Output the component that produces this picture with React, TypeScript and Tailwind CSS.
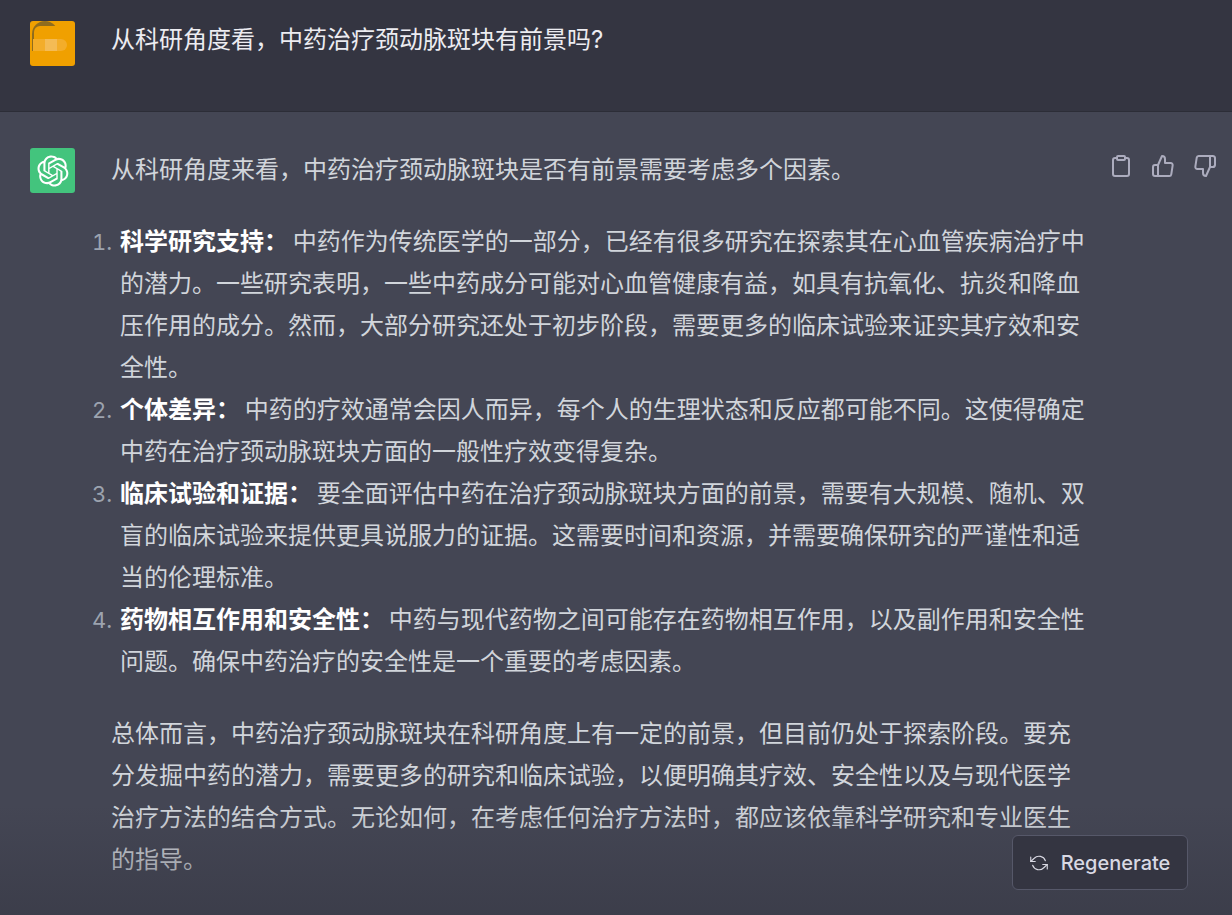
import React from 'react';

const logoPath =
  'M37.5324 16.8707C37.9808 15.5241 38.1363 14.0974 37.9886 12.6859C37.8409 11.2744 37.3934 9.91076 36.676 8.68622C35.6126 6.83404 33.9882 5.3676 32.0373 4.4985C30.0864 3.62941 27.9098 3.40259 25.8215 3.85078C24.8796 2.7893 23.7219 1.94125 22.4257 1.36341C21.1295 0.785575 19.7249 0.491269 18.3058 0.500197C16.1708 0.495044 14.0893 1.16803 12.3614 2.42214C10.6335 3.67624 9.34853 5.44666 8.6917 7.47815C7.30085 7.76286 5.98686 8.3414 4.8377 9.17505C3.68854 10.0087 2.73073 11.0782 2.02839 12.312C0.956464 14.1591 0.498905 16.2988 0.721698 18.4228C0.944492 20.5467 1.83612 22.5449 3.268 24.1293C2.81966 25.4759 2.66413 26.9026 2.81182 28.3141C2.95951 29.7256 3.40701 31.0892 4.12437 32.3138C5.18791 34.1659 6.8123 35.6322 8.76321 36.5013C10.7141 37.3704 12.8907 37.5973 14.9789 37.1492C15.9208 38.2107 17.0786 39.0587 18.3747 39.6366C19.6709 40.2144 21.0755 40.5087 22.4946 40.4998C24.6307 40.5054 26.7133 39.8321 28.4418 38.5772C30.1704 37.3223 31.4556 35.5506 32.1119 33.5179C33.5027 33.2332 34.8167 32.6547 35.9659 31.821C37.115 30.9874 38.0728 29.9178 38.7752 28.684C39.8458 26.8371 40.3023 24.6979 40.0789 22.5748C39.8556 20.4517 38.9639 18.4544 37.5324 16.8707ZM22.4978 37.8849C20.7443 37.8874 19.0459 37.2733 17.6994 36.1501C17.7601 36.117 17.8666 36.0586 17.936 36.0161L25.9004 31.4156C26.1003 31.3019 26.2663 31.137 26.3813 30.9378C26.4964 30.7386 26.5563 30.5124 26.5549 30.2825V19.0542L29.9213 20.998C29.9389 21.0068 29.9541 21.0198 29.9656 21.0359C29.977 21.052 29.9842 21.0707 29.9867 21.0902V30.3889C29.9842 32.375 29.1946 34.2791 27.7909 35.6841C26.3872 37.0892 24.4838 37.8806 22.4978 37.8849ZM6.39227 31.0064C5.51397 29.4888 5.19742 27.7107 5.49804 25.9832C5.55718 26.0187 5.66048 26.0818 5.73461 26.1244L13.699 30.7248C13.8975 30.8408 14.1233 30.902 14.3532 30.902C14.583 30.902 14.8088 30.8408 15.0073 30.7248L24.731 25.1103V28.9979C24.7321 29.0177 24.7283 29.0376 24.7199 29.0556C24.7115 29.0736 24.6988 29.0893 24.6829 29.1012L16.6317 33.7497C14.9096 34.7416 12.8643 35.0097 10.9447 34.4954C9.02506 33.9811 7.38785 32.7263 6.39227 31.0064ZM4.29707 13.6194C5.17156 12.0998 6.55279 10.9364 8.19885 10.3327C8.19885 10.4013 8.19491 10.5228 8.19491 10.6071V19.808C8.19351 20.0378 8.25334 20.2638 8.36823 20.4629C8.48312 20.6619 8.64893 20.8267 8.84863 20.9404L18.5723 26.5542L15.206 28.4979C15.1894 28.5089 15.1703 28.5155 15.1505 28.5173C15.1307 28.5191 15.1107 28.516 15.0924 28.5082L7.04046 23.8557C5.32135 22.8601 4.06716 21.2235 3.55289 19.3046C3.03862 17.3858 3.30624 15.3413 4.29707 13.6194ZM31.955 20.0556L22.2312 14.4411L25.5976 12.4981C25.6142 12.4872 25.6333 12.4805 25.6531 12.4787C25.6729 12.4769 25.6928 12.4801 25.7111 12.4879L33.7631 17.1364C34.9967 17.849 36.0017 18.8982 36.6606 20.1613C37.3194 21.4244 37.6047 22.849 37.4832 24.2684C37.3617 25.6878 36.8382 27.0432 35.9743 28.1759C35.1103 29.3086 33.9415 30.1717 32.6047 30.6641C32.6047 30.5947 32.6047 30.4733 32.6047 30.3889V21.188C32.6066 20.9586 32.5474 20.7328 32.4332 20.5338C32.319 20.3348 32.154 20.1698 31.955 20.0556ZM35.3055 15.0128C35.2464 14.9765 35.1431 14.9142 35.069 14.8717L27.1045 10.2712C26.906 10.1554 26.6803 10.0943 26.4504 10.0943C26.2206 10.0943 25.9948 10.1554 25.7963 10.2712L16.0726 15.8858V11.9982C16.0715 11.9783 16.0753 11.9585 16.0837 11.9405C16.0921 11.9225 16.1048 11.9068 16.1207 11.8949L24.1719 7.25025C25.4053 6.53903 26.8158 6.19376 28.2383 6.25482C29.6608 6.31589 31.0364 6.78077 32.2044 7.59508C33.3723 8.40939 34.2842 9.53945 34.8334 10.8531C35.3826 12.1667 35.5464 13.6095 35.3055 15.0128ZM14.2424 21.9419L10.8752 19.9981C10.8576 19.9893 10.8423 19.9763 10.8309 19.9602C10.8195 19.9441 10.8122 19.9254 10.8098 19.9058V10.6071C10.8107 9.18295 11.2173 7.78848 11.9819 6.58696C12.7466 5.38544 13.8377 4.42659 15.1275 3.82264C16.4173 3.21869 17.8524 2.99464 19.2649 3.1767C20.6775 3.35876 22.0089 3.93941 23.1034 4.85067C23.0427 4.88379 22.937 4.94215 22.8668 4.98473L14.9024 9.58517C14.7025 9.69878 14.5366 9.86356 14.4215 10.0626C14.3065 10.2616 14.2466 10.4877 14.2479 10.7175L14.2424 21.9419ZM16.071 17.9991L20.4018 15.4978L24.7325 17.9975V22.9985L20.4018 25.4983L16.071 22.9985V17.9991Z';

const items = [
  {
    title: '科学研究支持：',
    marker: "list-['1.__']",
    body: '中药作为传统医学的一部分，已经有很多研究在探索其在心血管疾病治疗中的潜力。一些研究表明，一些中药成分可能对心血管健康有益，如具有抗氧化、抗炎和降血压作用的成分。然而，大部分研究还处于初步阶段，需要更多的临床试验来证实其疗效和安全性。',
  },
  {
    title: '个体差异：',
    marker: "list-['2.__']",
    body: '中药的疗效通常会因人而异，每个人的生理状态和反应都可能不同。这使得确定中药在治疗颈动脉斑块方面的一般性疗效变得复杂。',
  },
  {
    title: '临床试验和证据：',
    marker: "list-['3.__']",
    body: '要全面评估中药在治疗颈动脉斑块方面的前景，需要有大规模、随机、双盲的临床试验来提供更具说服力的证据。这需要时间和资源，并需要确保研究的严谨性和适当的伦理标准。',
  },
  {
    title: '药物相互作用和安全性：',
    marker: "list-['4.__']",
    body: '中药与现代药物之间可能存在药物相互作用，以及副作用和安全性问题。确保中药治疗的安全性是一个重要的考虑因素。',
  },
];

function FeedbackIcons() {
  return (
    <div className="flex shrink-0 gap-[18px] pl-[19px] pt-[5px] text-[#acacbe]">
      <svg className="h-6 w-6" viewBox="0 0 24 24" fill="none" stroke="currentColor" strokeWidth="2" strokeLinecap="round" strokeLinejoin="round">
        <path d="M16 4h2a2 2 0 0 1 2 2v14a2 2 0 0 1-2 2H6a2 2 0 0 1-2-2V6a2 2 0 0 1 2-2h2" />
        <rect x="8" y="2" width="8" height="4" rx="1" ry="1" />
      </svg>
      <svg className="h-6 w-6" viewBox="0 0 24 24" fill="none" stroke="currentColor" strokeWidth="2" strokeLinecap="round" strokeLinejoin="round">
        <path d="M14 9V5a3 3 0 0 0-3-3l-4 9v11h11.28a2 2 0 0 0 2-1.7l1.38-9a2 2 0 0 0-2-2.3zM7 22H4a2 2 0 0 1-2-2v-7a2 2 0 0 1 2-2h3" />
      </svg>
      <svg className="h-6 w-6" viewBox="0 0 24 24" fill="none" stroke="currentColor" strokeWidth="2" strokeLinecap="round" strokeLinejoin="round">
        <path d="M10 15v4a3 3 0 0 0 3 3l4-9V2H5.72a2 2 0 0 0-2 1.7l-1.38 9a2 2 0 0 0 2 2.3zm7-13h2.67A2.31 2.31 0 0 1 22 4v7a2.31 2.31 0 0 1-2.33 2H17" />
      </svg>
    </div>
  );
}

export default function App() {
  return (
    <div className="relative h-[915px] w-[1232px] overflow-hidden bg-[#444654] font-['Inter','Noto_Sans_CJK_SC',sans-serif] text-[24px] leading-[42px] text-[#d1d5db]">
      {/* user message */}
      <div className="flex h-[112px] border-b border-[#2c2d37] bg-[#343541] pl-[30px] pt-[19px]">
        <div className="relative mt-[2px] h-[45px] w-[45px] shrink-0 overflow-hidden rounded-[3px] bg-[#f0a000]">
          <div className="absolute left-[2px] top-0 h-[30px] w-[26px] rounded-t-[13px] bg-[#8f6c1e]" />
          <div className="absolute left-[4px] top-[5px] h-[30px] w-[41px] rounded-tl-[6px] bg-[#f0a000]" />
          <div className="absolute left-[3px] top-[18px] h-[12px] w-[34px] rounded-r-[6px] bg-[#f3ad2a]" />
          <div className="absolute left-[15px] top-[18px] h-[12px] w-[12px] bg-[#f4bb55]" />
        </div>
        <div className="pl-[36px] text-[#ececf1]">从科研角度看，中药治疗颈动脉斑块有前景吗?</div>
      </div>

      {/* assistant message */}
      <div className="flex pl-[30px] pr-[15px] pt-[37px]">
        <div className="mt-[-1px] flex h-[45px] w-[45px] shrink-0 items-center justify-center rounded-[3px] bg-[#43c47d]">
          <svg className="h-[32px] w-[32px]" viewBox="0 0 41 41" fill="#fff">
            <path d={logoPath} />
          </svg>
        </div>
        <div className="w-[1015px] shrink-0 pl-[36px]">
          <p className="mb-[30px]">从科研角度来看，中药治疗颈动脉斑块是否有前景需要考虑多个因素。</p>
          <ol className="mb-[30px] pl-[9px] marker:text-[22px] marker:text-[#9ca3af]">
            {items.map((item) => (
              <li key={item.title} className={`${item.marker} [word-spacing:-2px]`}>
                <strong className="font-bold text-white">{item.title}</strong> {item.body}
              </li>
            ))}
          </ol>
          <p>
            总体而言，中药治疗颈动脉斑块在科研角度上有一定的前景，但目前仍处于探索阶段。要充分发掘中药的潜力，需要更多的研究和临床试验，以便明确其疗效、安全性以及与现代医学治疗方法的结合方式。无论如何，在考虑任何治疗方法时，都应该依靠科学研究和专业医生的指导。
          </p>
        </div>
        <FeedbackIcons />
      </div>

      {/* bottom fade + regenerate */}
      <div className="absolute inset-x-0 bottom-0 flex h-[110px] items-start justify-end bg-gradient-to-b from-[#34354100] to-[#34354180] pr-[44px] pt-[30px]">
        <button className="flex h-[55px] w-[176px] items-center justify-center gap-[13px] rounded-[6px] border border-[#565869] bg-[#343541] text-[20px] font-medium text-[#d9d9e3]">
          <svg className="h-[18px] w-[18px]" viewBox="0 0 24 24" fill="none" stroke="currentColor" strokeWidth="1.5" strokeLinecap="round" strokeLinejoin="round">
            <polyline points="1 4 1 10 7 10" />
            <polyline points="23 20 23 14 17 14" />
            <path d="M20.49 9A9 9 0 0 0 5.64 5.64L1 10m22 4l-4.64 4.36A9 9 0 0 1 3.51 15" />
          </svg>
          Regenerate
        </button>
      </div>
    </div>
  );
}
